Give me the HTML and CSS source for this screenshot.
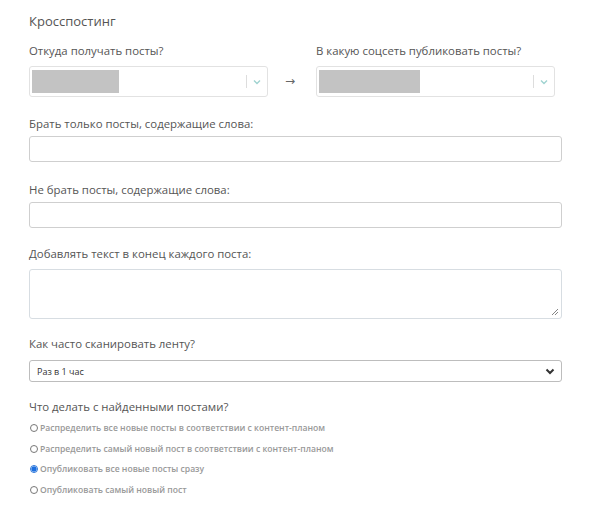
FILE: index.html
```html
<!DOCTYPE html>
<html lang="ru">
<head>
<meta charset="utf-8">
<link rel="stylesheet" href="styles.css">
</head>
<body>
<div class="page">
  <h1 class="title">Кросспостинг</h1>

  <div class="pair">
    <div class="col">
      <div class="label">Откуда получать посты?</div>
      <div class="picker">
        <div class="picker-value v1"></div>
        <div class="picker-ind">
          <span class="sep"></span>
          <svg class="chev" width="8" height="6" viewBox="0 0 8 6"><path d="M1 1.5 L4 4.5 L7 1.5" fill="none" stroke="#9fd3d0" stroke-width="1.4"/></svg>
        </div>
      </div>
    </div>
    <div class="arrow">→</div>
    <div class="col">
      <div class="label">В какую соцсеть публиковать посты?</div>
      <div class="picker">
        <div class="picker-value v2"></div>
        <div class="picker-ind">
          <span class="sep"></span>
          <svg class="chev" width="8" height="6" viewBox="0 0 8 6"><path d="M1 1.5 L4 4.5 L7 1.5" fill="none" stroke="#9fd3d0" stroke-width="1.4"/></svg>
        </div>
      </div>
    </div>
  </div>

  <div class="label l-words">Брать только посты, содержащие слова:</div>
  <div class="field"></div>

  <div class="label l-notwords">Не брать посты, содержащие слова:</div>
  <div class="field"></div>

  <div class="label l-append">Добавлять текст в конец каждого поста:</div>
  <div class="area">
    <svg class="grip" width="8" height="8" viewBox="0 0 8 8"><path d="M7 1 L1 7 M7 4 L4 7" stroke="#777" stroke-width="0.9"/></svg>
  </div>

  <div class="label l-freq">Как часто сканировать ленту?</div>
  <div class="dropdown">
    <span class="dropdown-text">Раз в 1 час</span>
    <svg class="dropdown-chev" width="10" height="7" viewBox="0 0 10 7"><path d="M1.5 1.5 L5 5 L8.5 1.5" fill="none" stroke="#333" stroke-width="2"/></svg>
  </div>

  <div class="label l-what">Что делать с найденными постами?</div>
  <div class="radios">
    <div class="radio"><span class="dot"></span>Распределить все новые посты в соответствии с контент-планом</div>
    <div class="radio"><span class="dot"></span>Распределить самый новый пост в соответствии с контент-планом</div>
    <div class="radio"><span class="dot on"></span>Опубликовать все новые посты сразу</div>
    <div class="radio"><span class="dot"></span>Опубликовать самый новый пост</div>
  </div>
</div>
</body>
</html>
```

FILE: styles.css
```css
html, body {
  margin: 0;
  padding: 0;
  background: #fff;
}
.page {
  font-family: "Open Sans", "DejaVu Sans", sans-serif;
  color: #555;
  width: 533px;
  padding: 11px 0 0 29px;
}
.title {
  margin: 0;
  font-size: 13px;
  font-weight: 400;
  line-height: 20px;
  color: #555;
}
.label {
  font-size: 11.4px;
  line-height: 16px;
  color: #555;
}
.pair {
  display: flex;
  align-items: flex-end;
  margin-top: 12px;
}
.col {
  width: 239px;
  display: flex;
  flex-direction: column;
  gap: 7px;
}
.arrow {
  width: 48px;
  height: 31px;
  line-height: 29px;
  padding-left: 17px;
  box-sizing: border-box;
  font-size: 12px;
  color: #666;
}
.picker {
  height: 31px;
  box-sizing: border-box;
  border: 1px solid #e2e2e2;
  border-radius: 3px;
  display: flex;
  align-items: center;
  padding: 3px 2px;
}
.picker-value {
  height: 23px;
  background: #c3c3c3;
}
.v1 { width: 87px; }
.v2 { width: 101px; }
.picker-ind {
  margin-left: auto;
  display: flex;
  align-items: center;
  gap: 6px;
  padding-right: 4px;
}
.sep {
  width: 1px;
  height: 13px;
  background: #ddd;
}
.chev { display: block; }
.l-words { margin-top: 19px; }
.field {
  margin-top: 4px;
  height: 26px;
  box-sizing: border-box;
  border: 1px solid #cfcfcf;
  border-radius: 3px;
}
.l-notwords { margin-top: 20px; }
.l-append { margin-top: 18px; }
.area {
  margin-top: 7px;
  height: 50px;
  box-sizing: border-box;
  border: 1px solid #d7dde2;
  border-radius: 3px;
  display: flex;
  align-items: flex-end;
  justify-content: flex-end;
  padding: 0 2px 2px 0;
}
.grip { display: block; }
.l-freq { margin-top: 17px; }
.dropdown {
  margin-top: 8px;
  height: 22px;
  box-sizing: border-box;
  border: 1px solid #bdbdbd;
  border-radius: 3px;
  display: flex;
  align-items: center;
  padding: 0 6px 0 7px;
}
.dropdown-text {
  font-size: 9px;
  color: #333;
}
.dropdown-chev {
  margin-left: auto;
  display: block;
}
.l-what { margin-top: 17px; }
.radios {
  margin-top: 3px;
  display: flex;
  flex-direction: column;
}
.radio {
  display: flex;
  align-items: center;
  height: 20.5px;
  font-size: 8.6px;
  font-weight: 600;
  color: #999;
  padding-left: 1px;
}
.dot {
  width: 8px;
  height: 8px;
  box-sizing: border-box;
  border: 1px solid #777;
  border-radius: 50%;
  margin-right: 2px;
  flex: none;
}
.dot.on {
  border-color: #2a75d8;
  background: radial-gradient(circle, #1c6fe0 0 2.3px, #cfe2fb 2.8px);
}
```
